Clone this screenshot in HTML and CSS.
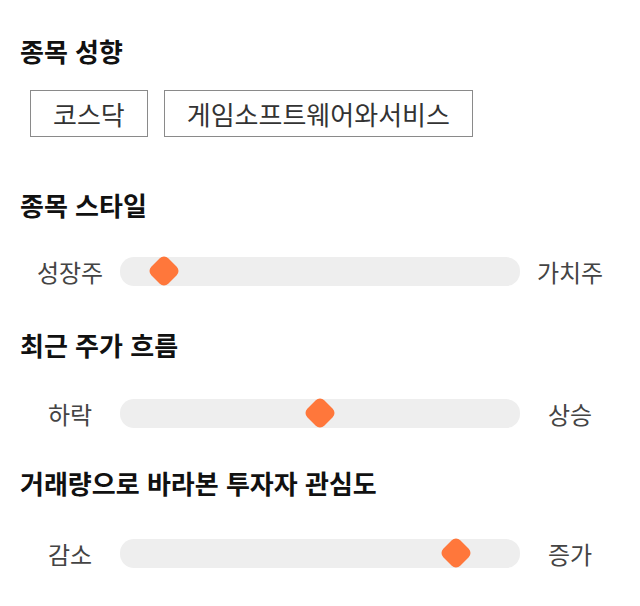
FILE: index.html
```html
<!DOCTYPE html>
<html lang="ko">
<head>
    <meta charset="UTF-8">
    <meta name="viewport" content="width=device-width, initial-scale=1.0">
    <title>종목 성향</title>
    <link rel="stylesheet" href="styles.css">
</head>
<body>
    <div class="panel">
        <div class="section">
            <h2 class="section-title">종목 성향</h2>
            <div class="chip-list">
                <span class="chip">코스닥</span>
                <span class="chip">게임소프트웨어와서비스</span>
            </div>
        </div>

        <div class="section">
            <h2 class="section-title">종목 스타일</h2>
            <div class="scale-row">
                <span class="scale-label">성장주</span>
                <div class="track"><div class="thumb" style="left: 11%"></div></div>
                <span class="scale-label">가치주</span>
            </div>
        </div>

        <div class="section">
            <h2 class="section-title">최근 주가 흐름</h2>
            <div class="scale-row">
                <span class="scale-label">하락</span>
                <div class="track"><div class="thumb" style="left: 50%"></div></div>
                <span class="scale-label">상승</span>
            </div>
        </div>

        <div class="section">
            <h2 class="section-title">거래량으로 바라본 투자자 관심도</h2>
            <div class="scale-row">
                <span class="scale-label">감소</span>
                <div class="track"><div class="thumb" style="left: 84%"></div></div>
                <span class="scale-label">증가</span>
            </div>
        </div>
    </div>
</body>
</html>
```

FILE: styles.css
```css
* {
    box-sizing: border-box;
    margin: 0;
    padding: 0;
    font-family: "Noto Sans CJK KR", "Noto Sans", sans-serif;
}
body {
    background: #ffffff;
    color: #111111;
}
.panel {
    padding: 34px 20px 20px 20px;
}
.section:nth-child(2) {
    margin-top: 51px;
}
.section:nth-child(3) {
    margin-top: 37px;
}
.section:nth-child(4) {
    margin-top: 33px;
}
.section-title {
    font-size: 26px;
    font-weight: 700;
    line-height: 34px;
    color: #111111;
}
.chip-list {
    display: flex;
    gap: 16px;
    margin-top: 22px;
    padding-left: 10px;
}
.chip {
    display: inline-flex;
    align-items: center;
    height: 47px;
    padding: 0 22px;
    border: 1px solid #8a8a8a;
    font-size: 26px;
    color: #333333;
}
.scale-row {
    display: grid;
    grid-template-columns: 100px 1fr 100px;
    align-items: center;
    height: 40px;
    margin-top: 29px;
}
.section:nth-child(3) .scale-row {
    margin-top: 31px;
}
.section:nth-child(4) .scale-row {
    margin-top: 33px;
}
.scale-label {
    text-align: center;
    font-size: 24px;
    color: #444444;
}
.track {
    position: relative;
    height: 29px;
    border-radius: 14px;
    background: #eeeeee;
}
.thumb {
    position: absolute;
    top: 50%;
    width: 24px;
    height: 24px;
    border-radius: 6px;
    background: #ff773b;
    transform: translate(-50%, -50%) rotate(45deg);
}
```
